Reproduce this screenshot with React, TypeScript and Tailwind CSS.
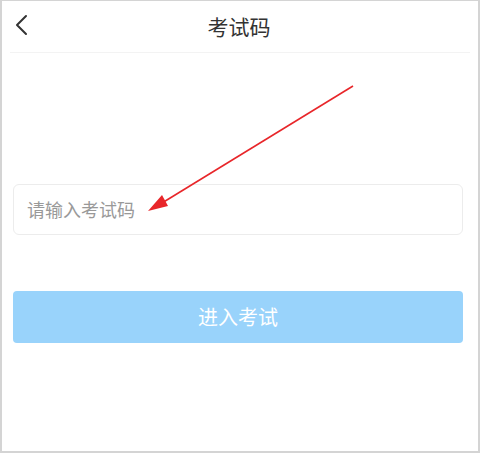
export default function App() {
  return (
    <div
      className="relative box-border h-[453px] w-[480px] overflow-hidden border-t border-r-2 border-b-2 border-l-2 border-[#d4d4d4] bg-white"
      style={{ fontFamily: '"Noto Sans CJK SC", "Noto Sans", sans-serif' }}
    >
      <header className="relative ml-2 mr-[8px] flex h-[52px] items-center justify-center border-b border-[#f3f3f3] pr-[2px]">
        <button className="absolute left-[4px] top-[13px] flex h-[22px] w-[14px] items-center justify-center">
          <svg width="14" height="22" viewBox="0 0 14 22" fill="none">
            <path d="M12 2 L3 11 L12 20" stroke="#333" strokeWidth="2" strokeLinecap="round" strokeLinejoin="round" />
          </svg>
        </button>
        <h1 className="text-[21px] leading-none text-[#333]">考试码</h1>
      </header>

      <main className="flex flex-col pl-[11px] pr-[15px] pt-[131px]">
        <div className="flex h-[51px] items-center rounded-[6px] border border-[#ececec] px-[13px]">
          <span className="text-[18px] text-[#999]">请输入考试码</span>
        </div>
        <button className="mt-[56px] flex h-[52px] items-center justify-center rounded-[4px] bg-[#99d3fb] text-[20px] text-white">
          进入考试
        </button>
      </main>

      <svg className="pointer-events-none absolute left-[-2px] top-[-1px]" width="480" height="453" viewBox="0 0 480 453">
        <line x1="353" y1="86" x2="162" y2="203" stroke="#e8262a" strokeWidth="1.6" />
        <polygon points="148,211 168,206 162,195" fill="#e8262a" />
      </svg>
    </div>
  )
}
